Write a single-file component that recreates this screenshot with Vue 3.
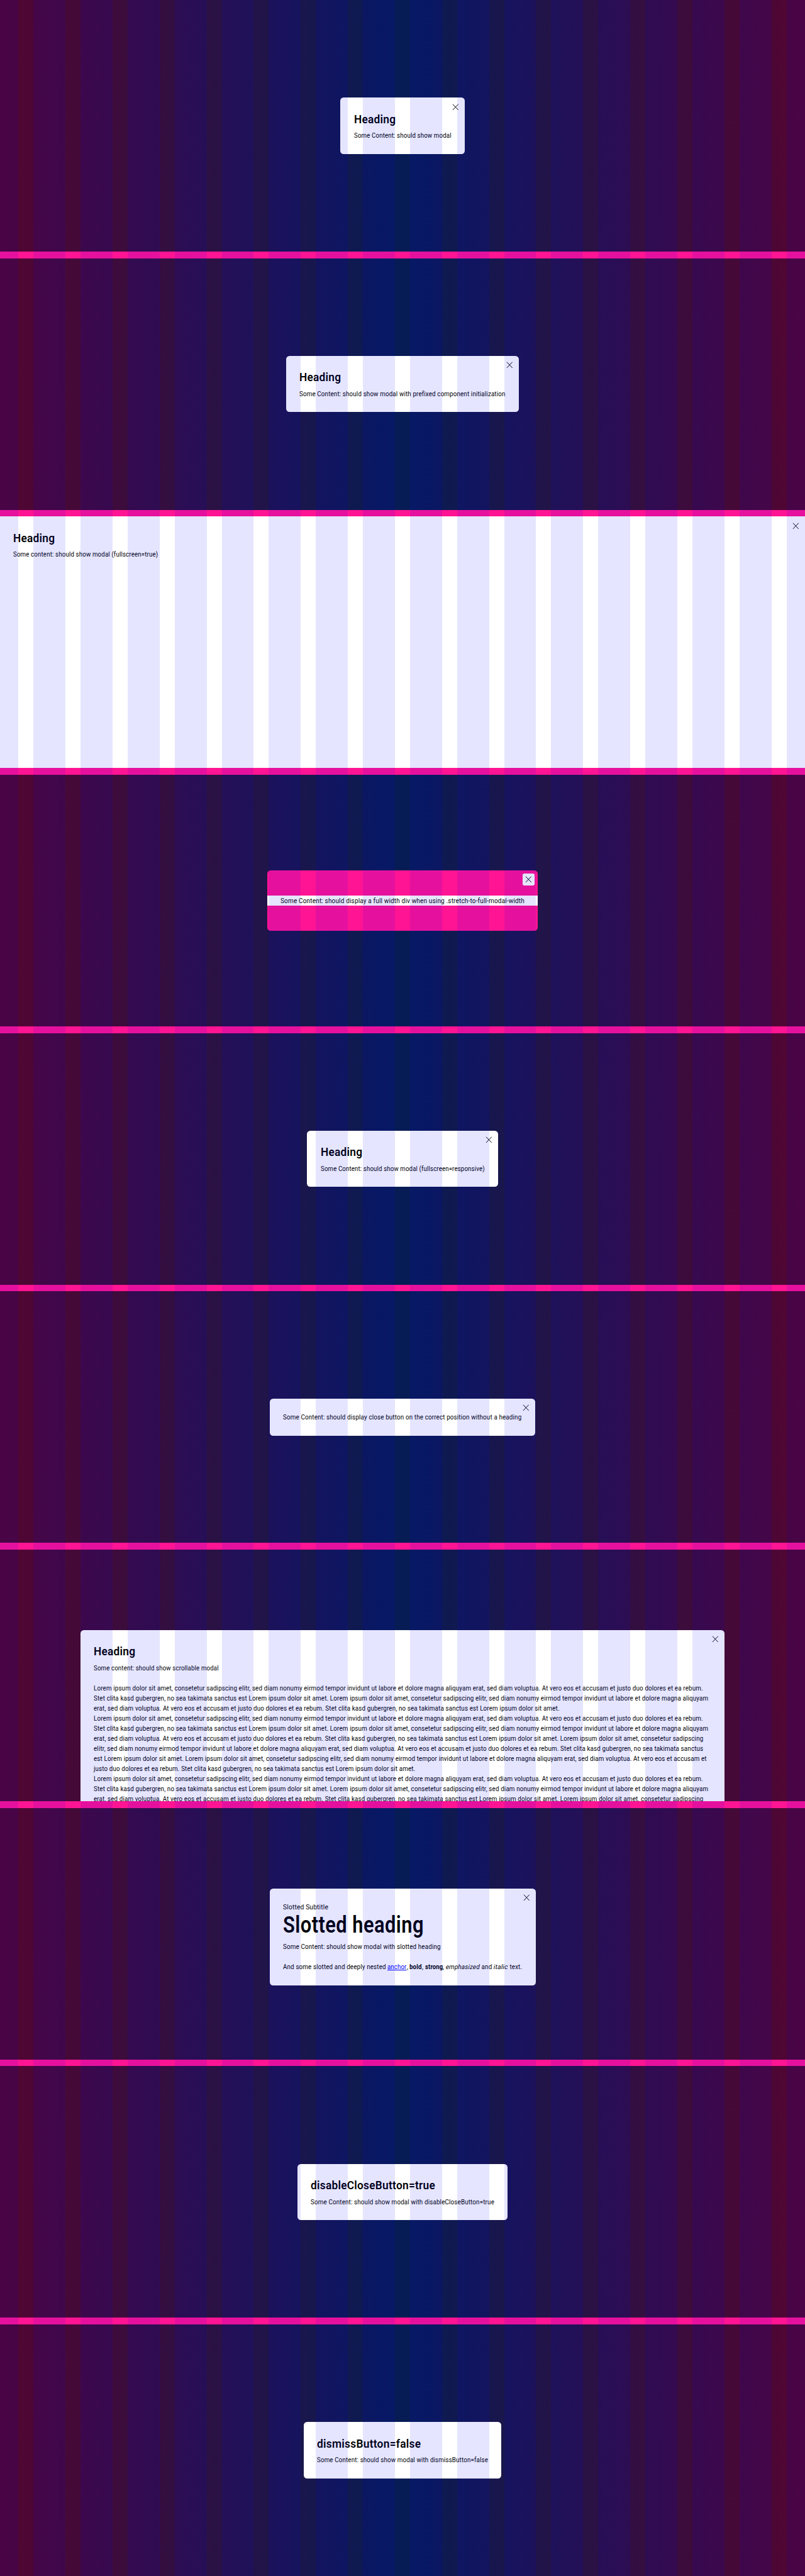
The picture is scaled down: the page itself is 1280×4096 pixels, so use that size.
<script setup>
// Widths below are in design pixels; 1rem equals 16 of them.
const REM = 32 / 3

// Condenses or widens a single run so that it takes up the given width.
const vFit = {
  mounted(el, { value }) {
    const natural = el.getBoundingClientRect().width
    const target = (value / 16) * REM
    const slant = el.matches('em, i') ? ' skewX(-11deg)' : ''
    el.style.transform = `scaleX(${target / natural})${slant}`
    el.style.marginRight = `${target - natural}px`
  },
}

const t = (text, w, tag = 'span') => ({ text, w, tag })

const L1 = t('Lorem ipsum dolor sit amet, consetetur sadipscing elitr, sed diam nonumy eirmod tempor invidunt ut labore et dolore magna aliquyam erat, sed diam voluptua. At vero eos et accusam et justo duo dolores et ea rebum.', 1453)
const L2 = t('Stet clita kasd gubergren, no sea takimata sanctus est Lorem ipsum dolor sit amet. Lorem ipsum dolor sit amet, consetetur sadipscing elitr, sed diam nonumy eirmod tempor invidunt ut labore et dolore magna aliquyam', 1466)
const L3 = t('erat, sed diam voluptua. At vero eos et accusam et justo duo dolores et ea rebum. Stet clita kasd gubergren, no sea takimata sanctus est Lorem ipsum dolor sit amet.', 1111)
const L6 = t('erat, sed diam voluptua. At vero eos et accusam et justo duo dolores et ea rebum. Stet clita kasd gubergren, no sea takimata sanctus est Lorem ipsum dolor sit amet. Lorem ipsum dolor sit amet, consetetur sadipscing', 1454)
const L7 = t('elitr, sed diam nonumy eirmod tempor invidunt ut labore et dolore magna aliquyam erat, sed diam voluptua. At vero eos et accusam et justo duo dolores et ea rebum. Stet clita kasd gubergren, no sea takimata sanctus', 1454)
const L8 = t('est Lorem ipsum dolor sit amet. Lorem ipsum dolor sit amet, consetetur sadipscing elitr, sed diam nonumy eirmod tempor invidunt ut labore et dolore magna aliquyam erat, sed diam voluptua. At vero eos et accusam et', 1462)
const L9 = t('justo duo dolores et ea rebum. Stet clita kasd gubergren, no sea takimata sanctus est Lorem ipsum dolor sit amet.', 767)

const modals = [
  { heading: t('Heading', 99.5), close: true, lines: [[t('Some Content: should show modal', 232)]] },
  { heading: t('Heading', 99.5), close: true, lines: [[t('Some Content: should show modal with prefixed component initialization', 491.3)]] },
  { kind: 'fullscreen', heading: t('Heading', 99.5), close: true, lines: [[t('Some content: should show modal (fullscreen=true)', 345.5)]] },
  { kind: 'stretched', close: true, lines: [[t('Some Content: should display a full width div when using .stretch-to-full-modal-width', 582)]] },
  { heading: t('Heading', 99.5), close: true, lines: [[t('Some Content: should show modal (fullscreen=responsive)', 391)]] },
  { close: true, lines: [[t('Some Content: should display close button on the correct position without a heading', 569)]] },
  {
    kind: 'scrollable',
    heading: t('Heading', 99.5),
    close: true,
    lines: [[t('Some content: should show scrollable modal', 298)], [], [L1], [L2], [L3], [L1], [L2], [L6], [L7], [L8], [L9], [L1], [L2], [L6]],
  },
  {
    subtitle: t('Slotted Subtitle', 108),
    heading: t('Slotted heading', 336),
    large: true,
    close: true,
    lines: [
      [t('Some Content: should show modal with slotted heading', 376)],
      [],
      [
        t('And some slotted and deeply nested ', 249.4),
        t('anchor', 45.6, 'a'),
        t(', ', 7.4),
        t('bold', 29.4, 'b'),
        t(', ', 7.2),
        t('strong', 42.6, 'strong'),
        t(', ', 7.4),
        t('emphasized', 81, 'em'),
        t(' and ', 33),
        t('italic', 34.2, 'i'),
        t(' text.', 33.2),
      ],
    ],
  },
  { heading: t('disableCloseButton=true', 297), lines: [[t('Some Content: should show modal with disableCloseButton=true', 438)]] },
  { heading: t('dismissButton=false', 248), lines: [[t('Some Content: should show modal with dismissButton=false', 408)]] },
]
</script>

<template>
  <div class="page">
    <section v-for="(m, i) in modals" :key="i" class="playground">
      <div class="backdrop" :class="m.kind">
        <div class="modal" :class="m.kind">
          <button v-if="m.close" class="close" aria-label="Close">
            <svg viewBox="0 0 28 28" fill="none" stroke="currentColor" stroke-width="1.5">
              <path d="M7.4 7.1 20.6 20.9M20.6 7.1 7.4 20.9" />
            </svg>
          </button>
          <p v-if="m.subtitle" class="line"><span v-fit="m.subtitle.w" class="run">{{ m.subtitle.text }}</span></p>
          <h2 v-if="m.heading" class="heading" :class="{ large: m.large }">
            <span v-fit="m.heading.w" class="run">{{ m.heading.text }}</span>
          </h2>
          <div class="content">
            <p v-for="(line, j) in m.lines" :key="j" class="line">
              <component :is="run.tag" v-for="(run, k) in line" :key="k" v-fit="run.w" class="run" :href="run.tag === 'a' ? '#' : null">{{ run.text }}</component>
            </p>
          </div>
        </div>
      </div>
    </section>
    <div class="grid-overlay">
      <div class="edge"></div>
      <div v-for="n in 16" :key="n" class="column"></div>
      <div class="edge"></div>
    </div>
  </div>
</template>

<style>
html {
  font-size: 10.66667px;
}
body {
  margin: 0;
}
</style>

<style scoped>
.page {
  position: relative;
  height: 384rem;
  overflow: hidden;
  display: flex;
  flex-direction: column;
  gap: 1rem;
  background: #ff1493;
  font-family: Roboto, "Liberation Sans", sans-serif;
  color: #010205;
}
.playground {
  flex: none;
  height: 37.5rem;
  overflow: hidden;
}
.backdrop {
  box-sizing: border-box;
  display: flex;
  height: 100%;
  padding: 12rem;
  background: linear-gradient(90deg, #530531, #061c55, #530531);
}
.backdrop.fullscreen {
  padding: 0;
}
.modal {
  position: relative;
  flex: none;
  box-sizing: border-box;
  margin: auto;
  padding: 2rem;
  border-radius: 0.5rem;
  background: #fff;
}
.modal.fullscreen {
  width: 100%;
  height: 100%;
  margin: 0;
  border-radius: 0;
}
.modal.scrollable {
  width: 96rem;
}
.modal.stretched {
  padding: 3.75rem 0;
  background: #ff1493;
}
.stretched .content {
  padding: 0 2rem;
  background: #fff;
}
.close {
  position: absolute;
  top: 0.5rem;
  right: 0.5rem;
  width: 1.75rem;
  height: 1.75rem;
  padding: 0;
  border: 0;
  border-radius: 0.25rem;
  background: #fff;
  color: #010205;
}
.close svg {
  display: block;
  width: 100%;
  height: 100%;
}
.run {
  display: inline-block;
  flex: none;
  letter-spacing: 0.015em;
  transform-origin: 0 50%;
}
.heading {
  display: flex;
  height: 2.375rem;
  margin: 0 0 0.5rem;
  font-size: 1.8rem;
  line-height: 2.4rem;
  font-weight: 600;
  white-space: pre;
}
.heading.large {
  height: 3.9375rem;
  font-size: 3.375rem;
  line-height: 3.9375rem;
}
.line {
  display: flex;
  height: 1.5rem;
  margin: 0;
  font-size: 1rem;
  line-height: 1.6rem;
  white-space: pre;
}
.line a {
  color: #00f;
}
.line b,
.line strong {
  font-weight: 700;
}
.line em,
.line i {
  font-style: normal;
}
.grid-overlay {
  position: absolute;
  inset: 0;
  display: flex;
  gap: 2.25rem;
  pointer-events: none;
}
.edge {
  width: 2.75rem;
  background: rgba(0, 0, 255, 0.1);
}
.column {
  width: 4.765625rem;
  background: rgba(0, 0, 255, 0.1);
}
</style>
